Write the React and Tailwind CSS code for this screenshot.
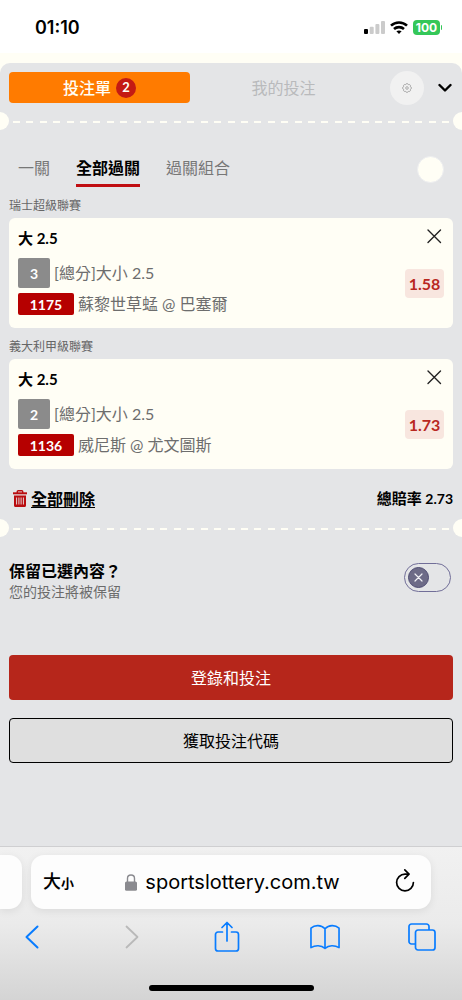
import { useState } from "react";

const BETS = [
  { league: "瑞士超級聯賽", pick: "大 2.5", no: "3", market: "[總分]大小 2.5", code: "1175", match: "蘇黎世草蜢 @ 巴塞爾", odds: "1.58" },
  { league: "義大利甲級聯賽", pick: "大 2.5", no: "2", market: "[總分]大小 2.5", code: "1136", match: "威尼斯 @ 尤文圖斯", odds: "1.73" },
];

const TABS = ["一關", "全部過關", "過關組合"];

function StatusBar() {
  return (
    <div className="flex h-[53px] items-center justify-between bg-white pl-[35px] pr-5 pt-[2px] font-['Inter',sans-serif]">
      <span className="text-[18px] font-semibold leading-6">01:10</span>
      <div className="flex items-center gap-[5px]">
        <svg width="21" height="13" viewBox="0 0 21 13" aria-hidden="true">
          <rect x="0" y="8" width="4" height="5" rx="1" fill="#000" />
          <rect x="5.7" y="5.7" width="4" height="7.3" rx="1" fill="#cbcbcb" />
          <rect x="11.4" y="3" width="4" height="10" rx="1" fill="#cbcbcb" />
          <rect x="17" y="0" width="4" height="13" rx="1" fill="#cbcbcb" />
        </svg>
        <svg width="18" height="13" viewBox="0 0 18 13" fill="none" stroke="#000" strokeWidth="2.6" aria-hidden="true">
          <path d="M1 4.600C5.400.4 12.600.4 17 4.600" />
          <path d="M4 8c2.800-2.500 7.200-2.500 10 0" />
          <path d="M9 13l-2.600-2.700c1.500-1.200 3.700-1.200 5.200 0z" fill="#000" stroke="none" />
        </svg>
        <div className="flex items-center gap-px">
          <span className="flex h-[15px] w-[27px] items-center justify-center rounded-[4px] bg-[#34c759] text-[12px] font-bold leading-none text-white">100</span>
          <span className="h-[5px] w-px rounded-r bg-[#34c759]" />
        </div>
      </div>
    </div>
  );
}

function TicketDivider() {
  return (
    <div className="flex h-[18px] items-center overflow-hidden" aria-hidden="true">
      <span className="h-[18px] w-[9px] rounded-r-full bg-[#fffef5]" />
      <div className="flex flex-1 justify-between px-1 pt-[2px]">
        {Array.from({ length: 33 }, (_, i) => (
          <span key={i} className="h-[2px] w-[7px] bg-[#fffef5]" />
        ))}
      </div>
      <span className="h-[18px] w-[9px] rounded-l-full bg-[#fffef5]" />
    </div>
  );
}

function GearIcon() {
  return (
    <svg width="10" height="10" viewBox="0 0 20 20" fill="none" stroke="#999" strokeWidth="1.600" strokeLinejoin="round" aria-hidden="true">
      <path d="M7.200 3.300a2.900 2.900 0 0 1 5.600 0a2.900 2.900 0 0 1 3.900 3.900a2.900 2.900 0 0 1 0 5.600a2.900 2.900 0 0 1-3.900 3.900a2.900 2.900 0 0 1-5.600 0a2.900 2.900 0 0 1-3.900-3.900a2.900 2.900 0 0 1 0-5.600a2.900 2.900 0 0 1 3.900-3.900z" />
      <circle cx="10" cy="10" r="2.600" />
    </svg>
  );
}

function TrashIcon() {
  return (
    <svg width="14" height="17" viewBox="0 0 14 17" fill="none" aria-hidden="true">
      <path d="M4.300 3V1.500c0-.5.3-.8.8-.8h3.800c.5 0 .8.3.8.8V3" stroke="#b90d10" strokeWidth="1.400" />
      <path d="M0 2.300h14v2H0z" fill="#b90d10" />
      <path d="M1 5.500h12V15.500c0 .8-.6 1.500-1.400 1.500H2.400C1.600 17 1 16.300 1 15.500z" fill="#b90d10" />
      <path d="M3.600 7.500v7M5.900 7.500v7M8.100 7.500v7M10.400 7.500v7" stroke="#e4d4d6" strokeWidth="1" />
    </svg>
  );
}

function BetCard({ bet }) {
  return (
    <section>
      <h3 className="flex h-[27px] items-center pt-[2px] text-[12px] text-[#666]">{bet.league}</h3>
      <div className="flex h-[110px] justify-between rounded-[6px] bg-[#fffef5] px-[9px]">
        <div className="flex flex-col text-[16px] text-[#6d6d6d]">
          <div className="flex h-10 items-center text-[15px] font-bold text-black">{bet.pick}</div>
          <div className="flex items-center gap-1">
            <span className="flex h-[30px] w-8 items-center justify-center rounded-[2px] bg-[#8b8b8b] text-[14px] font-bold text-white">{bet.no}</span>
            <span>{bet.market}</span>
          </div>
          <div className="mt-[5px] flex items-center gap-1">
            <span className="flex h-[22px] w-14 items-center justify-center rounded-[2px] bg-[#b60000] text-[14px] font-bold text-white">{bet.code}</span>
            <span className="leading-[22px]">{bet.match}</span>
          </div>
        </div>
        <div className="flex flex-col items-end gap-[23px] pt-2">
          <button type="button" aria-label="移除" className="flex size-5 items-center justify-center">
            <svg width="16" height="16" viewBox="0 0 16 16" stroke="#222" strokeWidth="1.400" strokeLinecap="round" aria-hidden="true">
              <path d="M2 2l12.500 12.500M14.500 2L2 14.500" />
            </svg>
          </button>
          <span className="flex h-[29px] w-[39px] items-center justify-center rounded-[4px] bg-[#f8e6df] text-[16px] font-bold text-[#b9281f]">{bet.odds}</span>
        </div>
      </div>
    </section>
  );
}

function BetSlip() {
  const [tab, setTab] = useState(1);
  return (
    <main className="flex flex-1 flex-col bg-[#fffef5] pt-[10px]">
      <div className="flex flex-1 flex-col rounded-t-[10px] bg-[#e4e5e7]">
        <div className="flex h-[49px] items-center pl-[9px] pr-[10px]">
          <button type="button" className="flex h-[31px] flex-[181] items-center justify-center gap-[5px] rounded-[4px] bg-[#ff7b00] text-[16px] font-medium text-[#fffef5]">
            投注單
            <span className="flex size-5 items-center justify-center rounded-full bg-[#c41a13] text-[13px] font-bold">2</span>
          </button>
          <button type="button" className="flex-[187] text-[16px] text-[#b9babc]">我的投注</button>
          <button type="button" aria-label="設定" className="ml-[13px] flex size-[34px] items-center justify-center rounded-full bg-[#f1f1f1]">
            <GearIcon />
          </button>
          <button type="button" aria-label="收合" className="ml-[14px]">
            <svg width="14" height="9" viewBox="0 0 14 9" fill="none" stroke="#000" strokeWidth="2.400" strokeLinecap="round" strokeLinejoin="round" aria-hidden="true">
              <path d="M1.500 2L7 7.500l5.500-5.500" />
            </svg>
          </button>
        </div>
        <TicketDivider />
        <nav className="mt-[26px] flex h-[35px] items-start px-[18px] text-[16px] text-[#777]">
          <div className="flex flex-1 gap-[26px]">
            {TABS.map((label, i) => (
              <button
                key={label}
                type="button"
                onClick={() => setTab(i)}
                className={i === tab ? "h-[31px] border-b-[3px] border-[#c00d12] pb-1 font-bold leading-[24px] text-black" : "h-[31px] border-b-[3px] border-transparent pb-1 leading-[24px]"}
              >
                {label}
              </button>
            ))}
          </div>
          <button type="button" aria-label="選項" className="size-[27px] rounded-full border border-[#edeef0] bg-[#fffef5]" />
        </nav>
        <div className="flex flex-col gap-1 px-[9px]">
          {BETS.map((bet) => (
            <BetCard key={bet.code} bet={bet} />
          ))}
        </div>
        <div className="flex h-[50px] items-center justify-between pl-[13px] pr-[9px] pt-[9px] text-[16px] font-bold">
          <button type="button" className="flex items-center gap-1 underline underline-offset-2">
            <TrashIcon />
            全部刪除
          </button>
          <span className="text-[15px]">總賠率 <span className="text-[14px]">2.73</span></span>
        </div>
        <TicketDivider />
        <div className="mt-[22px] flex items-start justify-between pl-[9px] pr-[11px]">
          <label htmlFor="keep" className="flex flex-col">
            <span className="text-[16px] font-bold leading-6">保留已選內容？</span>
            <span className="text-[14px] leading-[18px] text-[#6b6b6b]">您的投注將被保留</span>
          </label>
          <div className="relative mt-1 flex">
            <input id="keep" type="checkbox" role="switch" className="peer h-[29px] w-[47px] appearance-none rounded-full border border-[#716e98]" />
            <span className="pointer-events-none absolute left-1 top-1 flex size-[21px] items-center justify-center rounded-full border border-[#4e4b72] bg-[#6d6b87] peer-checked:left-[22px]">
              <svg width="9" height="9" viewBox="0 0 9 9" stroke="#f2f2f6" strokeWidth="1.200" strokeLinecap="round" aria-hidden="true">
                <path d="M1 1l7 7M8 1L1 8" />
              </svg>
            </span>
          </div>
        </div>
        <div className="mt-[54px] flex flex-col gap-[18px] px-[9px] text-[16px]">
          <button type="button" className="h-[45px] rounded-[4px] bg-[#b6261b] text-white">登錄和投注</button>
          <button type="button" className="h-[45px] rounded-[4px] border border-black bg-[#dfdfdf]">獲取投注代碼</button>
        </div>
      </div>
    </main>
  );
}

function BrowserBar() {
  return (
    <footer className="border-t border-[#cfcfd1] bg-linear-to-b from-[#f1f1f1] via-[#ebebeb] to-[#d4d4d4] pt-2 font-['Inter','Noto_Sans_CJK_TC',sans-serif]">
      <div className="flex gap-[9px] pr-[31px]">
        <div className="h-[54px] w-[22px] rounded-r-[13px] bg-[#fdfdfd] shadow-[0_2px_8px_#00000014]" />
        <div className="flex h-[54px] flex-1 items-center justify-between rounded-[13px] bg-[#fdfdfd] pl-3 pr-[16px] shadow-[0_2px_8px_#00000014]">
          <button type="button" className="flex items-baseline text-[18px] font-medium leading-6">
            大<span className="text-[13px] font-bold">小</span>
          </button>
          <a href="https://sportslottery.com.tw" className="flex items-center gap-2 pr-1 text-[20px] leading-6">
            <svg width="12" height="17" viewBox="0 0 12 17" aria-hidden="true">
              <path d="M2.500 8V4.500C2.500 2 4 1 6 1s3.500 1 3.500 3.500V8" fill="none" stroke="#8a8a8f" strokeWidth="1.400" />
              <rect x="0" y="7.500" width="12" height="9.300" rx="1.600" fill="#8a8a8f" />
            </svg>
            sportslottery.com.tw
          </a>
          <button type="button" aria-label="重新載入" className="-mt-1">
            <svg width="20" height="24" viewBox="0 0 20 24" fill="none" stroke="#000" strokeWidth="1.700" strokeLinecap="round" strokeLinejoin="round" aria-hidden="true">
              <path d="M13.500 6.100H10a8.400 8.400 0 1 0 8.400 8.400" />
              <path d="M9.800 1.900l4.200 4.200-4.200 4.200" />
            </svg>
          </button>
        </div>
      </div>
      <nav className="flex h-[55px] items-center justify-between pl-[17px] pr-[25px] pt-px" aria-label="瀏覽器">
        <button type="button" aria-label="返回" className="flex w-[30px] justify-center">
          <svg width="14" height="24" viewBox="0 0 14 24" fill="none" stroke="#087cff" strokeWidth="2" strokeLinecap="round" strokeLinejoin="round" aria-hidden="true">
            <path d="M12.500 1.500L1.500 12l11 10.500" />
          </svg>
        </button>
        <button type="button" aria-label="前進" className="flex w-[30px] justify-center pl-1 text-[#b9b9b9]">
          <svg width="14" height="24" viewBox="0 0 14 24" fill="none" stroke="currentColor" strokeWidth="1.800" strokeLinecap="round" strokeLinejoin="round" aria-hidden="true">
            <path d="M1.500 1.500L12.500 12l-11 10.500" />
          </svg>
        </button>
        <button type="button" aria-label="分享" className="flex w-[30px] justify-center">
          <svg width="26" height="32" viewBox="0 0 26 32" fill="none" stroke="#087cff" strokeWidth="1.700" strokeLinecap="round" strokeLinejoin="round" aria-hidden="true">
            <path d="M8.500 11H4a2.500 2.500 0 0 0-2.500 2.500v14A2.500 2.500 0 0 0 4 30h18a2.500 2.500 0 0 0 2.500-2.500v-14A2.500 2.500 0 0 0 22 11h-4.500M13 20V2M8 6.500L13 1.500l5 5" />
          </svg>
        </button>
        <button type="button" aria-label="書籤" className="flex w-[30px] justify-center">
          <svg width="30" height="26" viewBox="0 0 31 26" fill="none" stroke="#087cff" strokeWidth="1.700" strokeLinecap="round" strokeLinejoin="round" aria-hidden="true">
            <path d="M15.500 4.500C11.500.3 5 .3 1 3.800V24c4.500-2.700 10.500-2.700 14.500.7 4-3.400 10-3.400 14.500-.7V3.800C26 .3 19.500.3 15.500 4.500zM15.500 4.500v20.200" />
          </svg>
        </button>
        <button type="button" aria-label="分頁" className="flex w-[30px] justify-center">
          <svg width="28" height="28" viewBox="0 0 28 28" fill="none" stroke="#087cff" strokeWidth="1.700" aria-hidden="true">
            <path d="M7.500 21H3.500A2.500 2.500 0 0 1 1 18.500v-15A2.500 2.500 0 0 1 3.500 1h15A2.500 2.500 0 0 1 21 3.500v3.500" />
            <rect x="7.500" y="7" width="19.500" height="20" rx="2.500" />
          </svg>
        </button>
      </nav>
      <div className="flex h-[36px] items-start justify-center pt-[21px]">
        <span className="h-[6px] w-[165px] rounded-full bg-black" />
      </div>
    </footer>
  );
}

export default function App() {
  return (
    <div className="flex min-h-screen flex-col bg-[#e4e5e7] font-['Lato','Noto_Sans_CJK_TC',sans-serif] text-black" lang="zh-Hant">
      <StatusBar />
      <BetSlip />
      <BrowserBar />
    </div>
  );
}
